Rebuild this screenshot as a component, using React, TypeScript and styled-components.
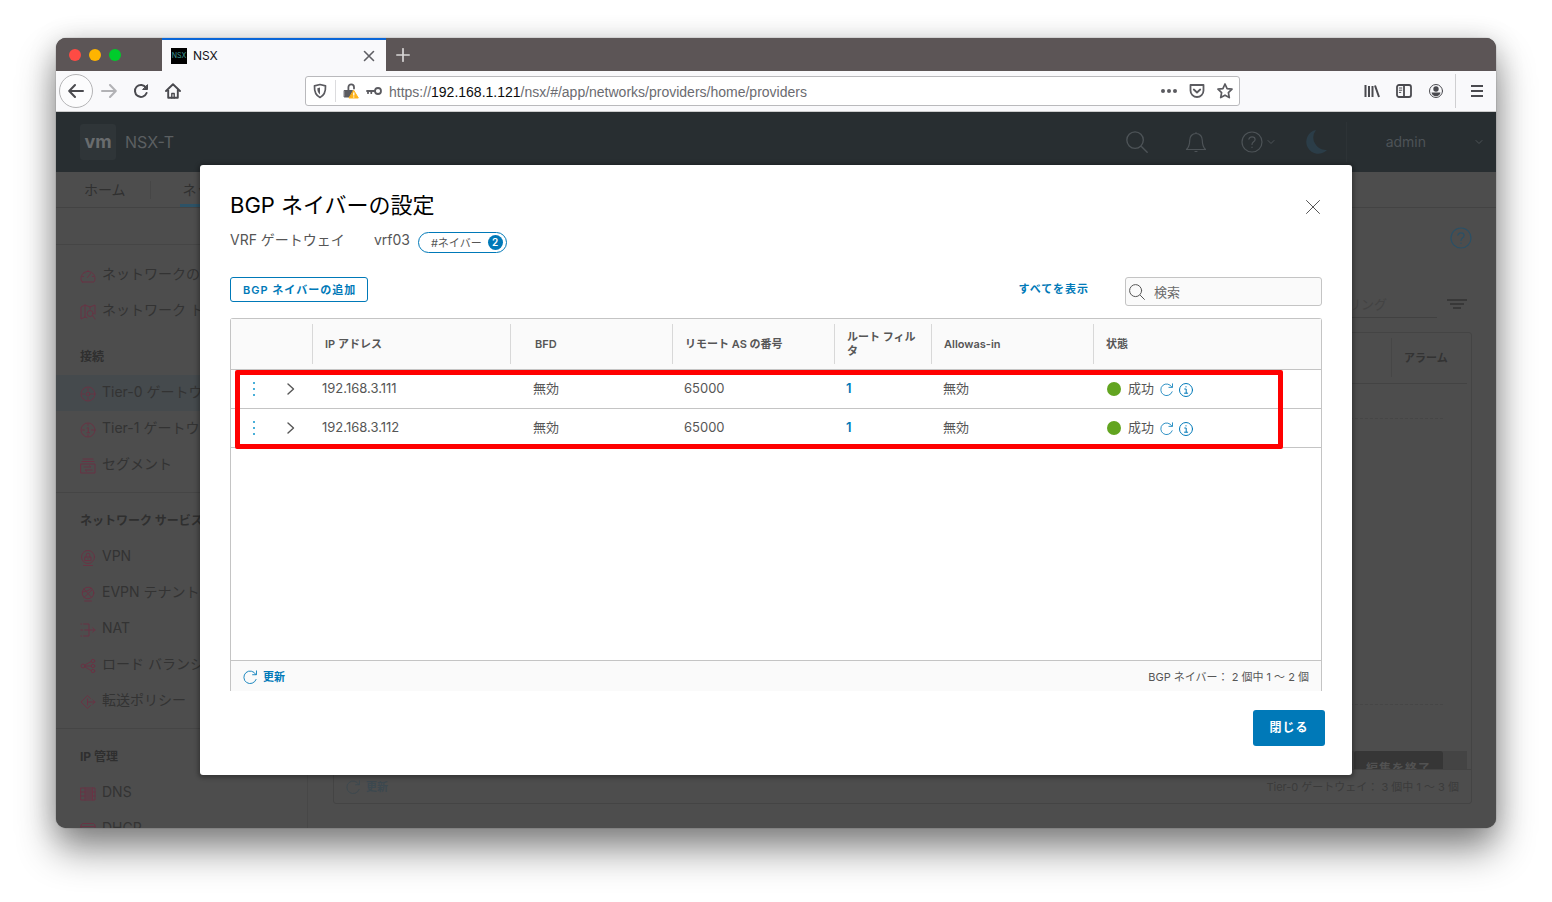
import React from 'react';
import styled, { createGlobalStyle } from 'styled-components';

const GlobalStyle = createGlobalStyle`
  * { box-sizing: border-box; }
  body {
    margin: 0;
    background: #ffffff;
    color: #565656;
    font-family: Inter, "Noto Sans CJK JP", sans-serif;
    font-size: 14px;
    line-height: 20px;
  }
  button, input { font: inherit; color: inherit; }
  button { padding: 0; border: 0; background: none; cursor: pointer; }
  a { color: inherit; text-decoration: none; }
  svg { display: block; flex: none; }
`;

/* ---------- icons ---------- */

type IconProps = { size?: number; box?: number; stroke?: number; color?: string; children: React.ReactNode };

const Icon = ({ size = 16, box = 16, stroke = 1, color = 'currentColor', children }: IconProps) => (
  <svg
    width={size}
    height={size}
    viewBox={`0 0 ${box} ${box}`}
    fill="none"
    stroke={color}
    strokeWidth={stroke}
    strokeLinecap="round"
    strokeLinejoin="round"
    aria-hidden="true"
  >
    {children}
  </svg>
);

const RefreshIcon = ({ size = 14 }: { size?: number }) => (
  <Icon size={size}>
    <path d="M14.6 5A7.200 7.200 0 1 0 15 10.800M15.400 1v4.400h-4.400" />
  </Icon>
);
const SearchIcon = ({ size = 16 }: { size?: number }) => (
  <Icon size={size}>
    <circle cx="6.6" cy="6.6" r="6" />
    <path d="M11.4 11.4l4 4" />
  </Icon>
);
const HelpIcon = ({ size = 22 }: { size?: number }) => (
  <Icon size={size} box={22} stroke={1.2}>
    <circle cx="11" cy="11" r="10" />
    <path d="M7.9 8.2c.4-1.6 1.6-2.3 3.1-2.3 1.8 0 3.1 1 3.1 2.6 0 2.4-3.1 2.3-3.1 5M11 16.2v.3" />
  </Icon>
);
const ChevronDown = () => (
  <Icon size={8} box={8}>
    <path d="M1 2.5l3 3 3-3" />
  </Icon>
);
const InfoIcon = () => (
  <Icon size={14} box={14}>
    <circle cx="7" cy="7" r="6.5" />
    <path d="M5.7 6h1.5v4M5.5 10.2h3.2M7 3.6v.4" />
  </Icon>
);

const navIcons: Record<string, React.ReactNode> = {
  gauge: <path d="M2.5 14h11a1 1 0 0 0 .8-.5A7 7 0 1 0 1.700 13.500a1 1 0 0 0 .8.5zM7.500 9.500l3-4M8 2.500v1M2.500 8.500h1M12.500 8.500h1M4 4.500l.7.7" />,
  map: <path d="M5 13l-4 2V3l4-2 5 2 5-2v9M5 1v12M5 13l2 .8M10 3v2M12.800 11.800L15 15M13.200 9.500a3 3 0 1 1-6 0 3 3 0 0 1 6 0z" />,
  tier0: (
    <>
      <circle cx="8" cy="8" r="7" />
      <circle cx="8" cy="8" r="2" />
      <path d="M8 2.500v1.800M8 11.700v1.800M2.500 8h1.800M11.700 8h1.800" />
    </>
  ),
  tier1: (
    <>
      <circle cx="8" cy="8" r="7" />
      <path d="M7 6.200L8.300 5.500v5M7 10.700h2.600M8 2.300v1M8 12.700v1M2.500 8h2M11.500 8h2" />
    </>
  ),
  segment: <path d="M1 6h14v9H1zM2 3.500h12M3 1h10M4 9h7l-1.500-1.300M12 12H5l1.500 1.300" />,
  vpn: (
    <>
      <circle cx="8" cy="7" r="6.500" />
      <path d="M5 7h6v3.500H5zM6.200 7V5a1.800 1.800 0 0 1 3.600 0v2M8 8.500v.5M3.500 15.500h9" />
    </>
  ),
  evpn: (
    <>
      <circle cx="8" cy="7" r="5.800" />
      <path d="M4 3l7.500 8.500M12.500 3.500L4 11.500M3 6c3-1 7-1 8-4M4.500 15h7" />
    </>
  ),
  nat: <path d="M1 2h.5M3.500 2H9v12H3.500M1 14h.5M1 8h1.500M4.500 8H15M12.800 5.800L15 8l-2.200 2.200" />,
  lb: (
    <>
      <circle cx="3" cy="8" r="2" />
      <circle cx="13" cy="3" r="1.700" />
      <circle cx="13" cy="8" r="1.700" />
      <circle cx="13" cy="13" r="1.700" />
      <path d="M5 7l6-3.500M5.200 8h6M5 9l6 3.500" />
    </>
  ),
  forward: <path d="M10.500 4.500L7.500 1.500 1 8l6.500 6.500 3-3M7.500 5v6M7.500 8H15M12.800 5.800L15 8l-2.200 2.200" />,
  dns: <path d="M1 2h14v12H1zM1 6h14M1 10h14M5 2v12M6 4h6M6 8h6M6 12h6M12.500 2v12" />,
  dhcp: <path d="M1 15V3l1.500-1.500h11L15 3v12M1 4.500h14M4 7.500h8" />,
};

/* ---------- browser chrome ---------- */

const Desktop = styled.div`
  display: flex;
  height: 100vh;
  min-height: 640px;
  padding: 38px 56px 74px;
`;

const BrowserWindow = styled.div`
  flex: 1;
  min-width: 0;
  display: flex;
  flex-direction: column;
  border-radius: 10px;
  overflow: hidden;
  background: #4d4d4d;
  box-shadow: 0 0 1px rgba(0, 0, 0, 0.7), 0 22px 38px rgba(0, 0, 0, 0.44), 0 4px 28px rgba(0, 0, 0, 0.18);
`;

const TabStrip = styled.div`
  flex: none;
  display: flex;
  height: 33px;
  background: #5c5556;
`;

const TrafficLights = styled.div`
  display: flex;
  align-items: center;
  gap: 8px;
  width: 106px;
  padding: 1px 0 0 13px;
`;

const Light = styled.button<{ $color: string }>`
  width: 12px;
  height: 12px;
  border-radius: 50%;
  background: ${(p) => p.$color};
`;

const BrowserTab = styled.div`
  display: flex;
  align-items: center;
  gap: 6px;
  width: 224px;
  padding: 0 11px 0 9px;
  border-top: 2px solid #0a66d8;
  background: #f9f9fb;
  color: #15141a;
  font-size: 12px;
`;

const Favicon = styled.span`
  display: grid;
  place-items: center;
  width: 16px;
  height: 16px;
  background: #000000;
  color: #3f9a94;
  font-size: 7px;
  line-height: 16px;
`;

const TabTitle = styled.span`
  flex: 1;
`;

const CloseTab = styled.button`
  color: #5f5f64;
`;

const NewTab = styled.button`
  width: 33px;
  display: grid;
  place-items: center;
  color: #d8d6d6;
`;

const Toolbar = styled.div`
  flex: none;
  display: flex;
  align-items: center;
  height: 41px;
  padding: 0 3px;
  background: #f9f9fb;
  border-bottom: 1px solid #cccccc;
  color: #4a4a4f;
`;

const ToolButton = styled.button<{ $faded?: boolean }>`
  display: grid;
  place-items: center;
  width: 32px;
  height: 32px;
  opacity: ${(p) => (p.$faded ? 0.4 : 1)};
`;

const BackButton = styled(ToolButton)`
  width: 34px;
  height: 34px;
  border: 1px solid #b4b4b6;
  border-radius: 50%;
  background: #fcfcfd;
`;

const AddressSlot = styled.div`
  flex: 1;
  display: flex;
  justify-content: center;
  padding: 0 116px;
`;

const AddressBar = styled.div`
  flex: 1;
  display: flex;
  align-items: center;
  gap: 12px;
  height: 30px;
  padding: 0 6px;
  border: 1px solid #b9b9bc;
  border-radius: 3px;
  background: #ffffff;
  color: #5b5b60;
`;

const SiteIcons = styled.div`
  display: flex;
  align-items: center;
  gap: 7px;
`;

const SiteDivider = styled.span`
  width: 1px;
  height: 22px;
  background: #dcdcde;
`;

const Address = styled.div`
  flex: 1;
  margin-left: -5px;
  padding-top: 2px;
  font-family: "Liberation Sans", sans-serif;
  font-size: 14px;
  white-space: nowrap;
  color: #6b6b70;
`;

const Host = styled.span`
  color: #0c0c0d;
`;

const ToolDivider = styled.span`
  width: 1px;
  height: 34px;
  margin: 0 5px 0 3px;
  background: #cfcfd1;
`;

/* ---------- page behind the dialog ---------- */

const AppArea = styled.div`
  position: relative;
  flex: 1;
  min-height: 0;
  display: flex;
  flex-direction: column;
  overflow: hidden;
  color: #333333;
`;

const AppHeader = styled.header`
  flex: none;
  display: flex;
  align-items: center;
  justify-content: space-between;
  height: 60px;
  padding: 0 13px 0 24px;
  background: #282e31;
  color: #4d5357;
`;

const Brand = styled.div`
  display: flex;
  align-items: center;
  gap: 9px;
  color: #5b5f61;
  font-size: 16px;
`;

const BrandMark = styled.span`
  display: grid;
  place-items: center;
  width: 36px;
  height: 36px;
  border-radius: 3px;
  background: #2f3538;
  color: #696c6e;
  font-size: 18px;
  font-weight: 700;
  line-height: 32px;
`;

const HeaderTools = styled.div`
  display: flex;
  align-items: center;
`;

const HeaderButton = styled.button<{ $gap: number }>`
  display: flex;
  align-items: center;
  gap: 4px;
  margin-right: ${(p) => p.$gap}px;
`;

const UserMenu = styled.button`
  display: flex;
  align-items: center;
  gap: 49px;
  height: 40px;
  padding-left: 39px;
  border-left: 1px solid #2d3336;
`;

const MainTabs = styled.nav`
  flex: none;
  display: flex;
  height: 36px;
  padding-left: 28px;
  border-bottom: 1px solid #434343;
  color: #303030;
`;

const MainTab = styled.a<{ $active?: boolean }>`
  padding: 8px 3px 0;
  margin-left: ${(p) => (p.$active ? '29px' : '-3px')};
  line-height: 20px;
  border-bottom: 3px solid ${(p) => (p.$active ? '#2d5266' : 'transparent')};
`;

const TabDivider = styled.span`
  width: 1px;
  height: 18px;
  margin: 9px 0 0 21px;
  background: #464646;
`;

const Body = styled.div`
  flex: 1;
  min-height: 0;
  display: flex;
`;

const Sidebar = styled.nav`
  flex: none;
  width: 252px;
  padding-top: 36px;
  border-right: 1px solid #474747;
  overflow: hidden;
`;

const NavGroup = styled.section<{ $first?: boolean }>`
  padding: ${(p) => (p.$first ? '12px' : '0')} 0 9px;
  border-top: 1px solid #454545;
`;

const NavHeading = styled.h2`
  height: 46px;
  margin: 0;
  padding: 19px 24px 0;
  font-size: 12px;
  line-height: 18px;
  font-weight: 700;
  color: #2f2f2f;
`;

const NavItem = styled.a<{ $active?: boolean }>`
  display: flex;
  align-items: center;
  gap: 6px;
  height: 36px;
  padding: 0 24px 2px;
  white-space: nowrap;
  background: ${(p) => (p.$active ? '#454a4d' : 'transparent')};
  svg { color: #693344; margin-top: 4px; }
`;

const Main = styled.main`
  flex: 1;
  min-width: 0;
  display: flex;
  flex-direction: column;
  padding: 19px 24px 24px 25px;
`;

const MainTop = styled.div`
  display: flex;
  justify-content: flex-end;
  color: #2a5066;
`;

const FilterRow = styled.div`
  display: flex;
  justify-content: flex-end;
  align-items: center;
  gap: 10px;
  height: 27px;
  margin: 42px 5px 14px 0;
`;

const FilterInput = styled.input`
  width: 260px;
  height: 27px;
  padding: 0 50px 0 0;
  border: 0;
  border-bottom: 1px solid #414141;
  background: none;
  font-size: 13px;
  text-align: right;
  &::placeholder { color: #434343; opacity: 1; }
`;

const BackGrid = styled.div`
  flex: 1;
  display: flex;
  flex-direction: column;
  min-height: 0;
  border: 1px solid #444444;
  border-radius: 3px;
`;

const BackHead = styled.div`
  display: flex;
  justify-content: flex-end;
  height: 51px;
  margin-right: 4px;
  padding: 5px 0 6px;
  border-bottom: 1px solid #434343;
`;

const BackHeadCell = styled.span`
  width: 76px;
  padding-left: 12px;
  border-left: 1px solid #464646;
  font-size: 11px;
  font-weight: 700;
  line-height: 40px;
`;

const BackRows = styled.div`
  flex: 1;
  display: flex;
  flex-direction: column;
  justify-content: space-between;
  min-height: 0;
  padding-top: 34px;
  margin-right: 4px;
`;

const Dotted = styled.div`
  margin-right: 24px;
  border-top: 1px dashed #464646;
`;

const EditBar = styled.div`
  display: flex;
  justify-content: flex-end;
  height: 18px;
  margin-top: 46px;
  padding-right: 24px;
  background: #444444;
  overflow: hidden;
`;

const EditButton = styled.button`
  height: 36px;
  padding: 0 12px;
  border-radius: 3px;
  background: #363636;
  color: #525252;
  font-size: 12px;
  font-weight: 700;
  letter-spacing: 1px;
`;

const BackFoot = styled.footer`
  flex: none;
  display: flex;
  align-items: center;
  justify-content: space-between;
  height: 34px;
  padding: 0 12px;
  border-top: 1px solid #434343;
  color: #3b3b3b;
  font-size: 11px;
`;

/* ---------- dialog ---------- */

const Overlay = styled.div`
  position: absolute;
  inset: 0;
  display: flex;
  justify-content: center;
  padding: 53px 0;
`;

const Dialog = styled.section`
  width: 80%;
  display: flex;
  flex-direction: column;
  padding: 26px 30px 29px;
  border-radius: 3px;
  background: #ffffff;
  color: #565656;
  box-shadow: 0 1px 4px 2px rgba(0, 0, 0, 0.3);
`;

const DialogHead = styled.div`
  display: flex;
  justify-content: space-between;
  align-items: center;
  height: 28px;
`;

const DialogTitle = styled.h1`
  margin: 0;
  color: #000000;
  font-size: 22px;
  font-weight: 400;
  line-height: 28px;
`;

const CloseIconButton = styled.button`
  padding: 4px 2px 0 0;
`;

const Subtitle = styled.div`
  display: flex;
  align-items: center;
  height: 24px;
  margin-top: 9px;
`;

const GatewayName = styled.span`
  margin: 0 8px 0 29px;
`;

const NeighborTag = styled.button`
  display: flex;
  align-items: center;
  gap: 6px;
  height: 21px;
  margin-top: 5px;
  padding: 0 3px 0 12px;
  border: 1px solid #0079b8;
  border-radius: 11px;
  font-size: 11px;
`;

const Count = styled.span`
  width: 15px;
  height: 15px;
  border-radius: 50%;
  background: #0079b8;
  color: #ffffff;
  font-size: 10px;
  font-weight: 600;
  line-height: 15px;
  text-align: center;
`;

const Actions = styled.div`
  display: flex;
  align-items: flex-start;
  height: 29px;
  margin: 25px 0 12px;
`;

const OutlineButton = styled.button`
  height: 25px;
  padding: 0 11px 0 12px;
  border: 1px solid #0079b8;
  border-radius: 3px;
  color: #0079b8;
  font-size: 11px;
  font-weight: 600;
  letter-spacing: 1px;
`;

const ShowAll = styled.a`
  margin: 0 36px 0 auto;
  color: #0079b8;
  font-size: 11px;
  font-weight: 600;
  line-height: 24px;
  letter-spacing: 1px;
`;

const SearchBox = styled.label`
  display: flex;
  align-items: center;
  gap: 9px;
  width: 197px;
  height: 29px;
  padding: 0 3px;
  border: 1px solid #c4c4c4;
  border-radius: 3px;
  background: #fafafa;
`;

const SearchInput = styled.input`
  flex: 1;
  min-width: 0;
  padding: 0;
  border: 0;
  outline: 0;
  background: none;
  font-size: 13px;
  &::placeholder { color: #6a6a6a; opacity: 1; }
`;

const Grid = styled.div`
  position: relative;
  flex: 1;
  min-height: 0;
  display: flex;
  flex-direction: column;
  border: 1px solid #c4c4c4;
  border-bottom: 0;
  border-radius: 3px 3px 0 0;
`;

const GridScroll = styled.div`
  flex: 1;
  min-height: 0;
`;

const Table = styled.table`
  width: 100%;
  table-layout: fixed;
  border-collapse: separate;
  border-spacing: 0;
`;

const Col = styled.col<{ $w?: number }>`
  width: ${(p) => (p.$w ? `${p.$w}px` : 'auto')};
`;

const Th = styled.th`
  height: 51px;
  padding: 0;
  background: #fafafa;
  border-bottom: 1px solid #c4c4c4;
  text-align: left;
`;

const ThLabel = styled.div<{ $wide?: boolean; $plain?: boolean }>`
  display: flex;
  align-items: center;
  height: 40px;
  padding: 0 8px 0 ${(p) => (p.$wide ? 24 : 12)}px;
  border-left: 1px solid ${(p) => (p.$plain ? 'transparent' : '#d8d8d8')};
  font-size: 11px;
  font-weight: 600;
  line-height: 14px;
`;

const Td = styled.td<{ $pad?: number }>`
  height: 39px;
  padding: 0 0 2px ${(p) => p.$pad ?? 12}px;
  border-bottom: 1px solid #c4c4c4;
  font-size: 13px;
`;

const RowTools = styled.div`
  display: flex;
  align-items: center;
  gap: 17px;
  padding-top: 2px;
`;

const KebabButton = styled.button`
  color: #49afd9;
`;

const FilterLink = styled.a`
  color: #0079b8;
  font-weight: 600;
`;

const Status = styled.div`
  display: flex;
  align-items: center;
  gap: 6px;
  color: #0079b8;
`;

const StatusText = styled.span`
  color: #565656;
`;

const StatusDot = styled.span`
  width: 14px;
  height: 14px;
  margin: 2px 1px 0 0;
  border-radius: 50%;
  background: #62a420;
`;

const StatusButton = styled.button`
  margin-top: 3px;
`;

const Highlight = styled.div`
  position: absolute;
  top: 51px;
  left: 4px;
  right: 38px;
  height: 79px;
  border: 5px solid #ff0000;
  border-radius: 2px;
  pointer-events: none;
`;

const GridFoot = styled.footer`
  display: flex;
  align-items: center;
  justify-content: space-between;
  height: 31px;
  padding: 2px 12px 0;
  border-top: 1px solid #c4c4c4;
  background: #fafafa;
  font-size: 11px;
`;

const RefreshButton = styled.button<{ $dim?: boolean }>`
  display: flex;
  align-items: center;
  gap: 6px;
  color: ${(p) => (p.$dim ? '#3c484f' : '#0079b8')};
  font-size: 11px;
  font-weight: 600;
`;

const DialogFoot = styled.div`
  display: flex;
  justify-content: flex-end;
  margin: 19px -3px 0 0;
`;

const PrimaryButton = styled.button`
  width: 72px;
  height: 36px;
  border-radius: 3px;
  background: #0079b8;
  color: #ffffff;
  font-size: 12px;
  font-weight: 600;
  letter-spacing: 1px;
`;

/* ---------- data ---------- */

type Item = { icon: string; label: string; active?: boolean };
type Group = { heading?: string; items: Item[] };

const overview: Item[] = [
  { icon: 'gauge', label: 'ネットワークの概要' },
  { icon: 'map', label: 'ネットワーク トポロジ' },
];

const groups: Group[] = [
  {
    heading: '接続',
    items: [
      { icon: 'tier0', label: 'Tier-0 ゲートウェイ', active: true },
      { icon: 'tier1', label: 'Tier-1 ゲートウェイ' },
      { icon: 'segment', label: 'セグメント' },
    ],
  },
  {
    heading: 'ネットワーク サービス',
    items: [
      { icon: 'vpn', label: 'VPN' },
      { icon: 'evpn', label: 'EVPN テナント' },
      { icon: 'nat', label: 'NAT' },
      { icon: 'lb', label: 'ロード バランシング' },
      { icon: 'forward', label: '転送ポリシー' },
    ],
  },
  {
    heading: 'IP 管理',
    items: [
      { icon: 'dns', label: 'DNS' },
      { icon: 'dhcp', label: 'DHCP' },
    ],
  },
];

const neighbors = [
  { ip: '192.168.3.111', bfd: '無効', as: '65000', filters: '1', allowas: '無効', status: '成功' },
  { ip: '192.168.3.112', bfd: '無効', as: '65000', filters: '1', allowas: '無効', status: '成功' },
];

const NavLinks = ({ items }: { items: Item[] }) => (
  <>
    {items.map((item) => (
      <NavItem key={item.label} href="#" $active={item.active}>
        <Icon>{navIcons[item.icon]}</Icon>
        {item.label}
      </NavItem>
    ))}
  </>
);

const BrowserChrome = () => (
  <>
    <TabStrip>
      <TrafficLights>
        <Light $color="#ff4b44" aria-label="Close window" />
        <Light $color="#ffb400" aria-label="Minimize window" />
        <Light $color="#00cc2c" aria-label="Zoom window" />
      </TrafficLights>
      <BrowserTab>
        <Favicon>NSX</Favicon>
        <TabTitle>NSX</TabTitle>
        <CloseTab aria-label="Close tab">
          <Icon size={12} box={12} stroke={1.6}>
            <path d="M1.500 1.500l9 9M10.500 1.500l-9 9" />
          </Icon>
        </CloseTab>
      </BrowserTab>
      <NewTab aria-label="New tab">
        <Icon size={14} box={14} stroke={1.7}>
          <path d="M7 .8v12.400M.8 7h12.400" />
        </Icon>
      </NewTab>
    </TabStrip>
    <Toolbar>
      <BackButton aria-label="Back">
        <Icon stroke={2}>
          <path d="M15 8H1.500M7 2L1.200 8 7 14" />
        </Icon>
      </BackButton>
      <ToolButton $faded aria-label="Forward">
        <Icon stroke={2}>
          <path d="M1 8h13.500M9 2l5.800 6L9 14" />
        </Icon>
      </ToolButton>
      <ToolButton aria-label="Reload">
        <Icon stroke={2}>
          <path d="M13 4.600A6 6 0 1 0 13.600 10" />
          <path d="M14.500 2v4.500H10z" fill="currentColor" stroke="currentColor" strokeWidth="1" />
        </Icon>
      </ToolButton>
      <ToolButton aria-label="Home">
        <Icon stroke={1.9}>
          <path d="M1 8l7-6.700L15 8M3.200 7v7.800h9.600V7" />
          <path d="M6.800 15v-4.500h2.400V15" strokeWidth="1.400" />
        </Icon>
      </ToolButton>
      <AddressSlot>
        <AddressBar>
          <SiteIcons>
            <Icon stroke={1.7}>
              <path d="M8 1.500l5.500 1.300c.3 6-1.300 9.700-5.500 11.700-4.200-2-5.800-5.700-5.500-11.700z" />
              <path d="M8 4.500v7C6.200 10 5.300 8 5.300 5.200z" fill="currentColor" stroke="none" />
            </Icon>
            <SiteDivider />
            <Icon>
              <path d="M5.400 7V4.200a2.800 2.800 0 0 1 5.600 0V5.500" strokeWidth="1.800" />
              <path d="M1.500 7.500h8V14h-8z" fill="currentColor" />
              <path d="M10.800 7.500L15.300 15H6.300z" fill="#ffb31a" stroke="#ffb31a" />
              <path d="M10.800 9.800v2.200M10.800 13.900v.1" stroke="#ffffff" strokeWidth="1.300" />
            </Icon>
            <Icon stroke={1.8}>
              <circle cx="12" cy="8" r="3" />
              <path d="M9 8H1M2 8v2.200M5.300 8v2.200" />
            </Icon>
          </SiteIcons>
          <Address>
            https://<Host>192.168.1.121</Host>/nsx/#/app/networks/providers/home/providers
          </Address>
          <Icon>
            <g fill="currentColor" stroke="none">
              <circle cx="2" cy="8" r="2" />
              <circle cx="8" cy="8" r="2" />
              <circle cx="14" cy="8" r="2" />
            </g>
          </Icon>
          <Icon stroke={1.8}>
            <path d="M1.500 2h13v5.500a6.500 6.500 0 0 1-13 0zM4.800 6.500L8 9.500l3.200-3" />
          </Icon>
          <Icon stroke={1.7}>
            <path d="M8 1l2.100 4.600 4.900.6-3.600 3.400.9 5L8 12.200l-4.300 2.400.9-5L1 6.200l4.900-.6z" />
          </Icon>
        </AddressBar>
      </AddressSlot>
      <ToolButton aria-label="Library">
        <Icon stroke={2}>
          <path d="M1.500 2v12M5 3v11M8.500 3v11M11 2.500l4 11.500" strokeLinecap="butt" />
        </Icon>
      </ToolButton>
      <ToolButton aria-label="Sidebars">
        <Icon stroke={1.8}>
          <rect x="1" y="2" width="14" height="12" rx="2" />
          <path d="M8 2v12" />
          <path d="M3.300 5h2.500M3.300 7.200h2.500M3.300 9.400h1.500" strokeWidth="1" />
        </Icon>
      </ToolButton>
      <ToolButton aria-label="Account">
        <Icon>
          <circle cx="8" cy="8" r="6.500" />
          <circle cx="8" cy="6" r="2.700" fill="currentColor" stroke="none" />
          <path d="M3.500 9.500h9c-.5 2.500-2.300 3.700-4.500 3.700s-4-1.200-4.500-3.700z" fill="currentColor" stroke="none" />
        </Icon>
      </ToolButton>
      <ToolDivider />
      <ToolButton aria-label="Menu">
        <Icon stroke={2}>
          <path d="M2 3h12M2 8h12M2 13h12" strokeLinecap="butt" />
        </Icon>
      </ToolButton>
    </Toolbar>
  </>
);

const GatewayPage = () => (
  <>
    <AppHeader>
      <Brand>
        <BrandMark>vm</BrandMark>
        NSX-T
      </Brand>
      <HeaderTools>
        <HeaderButton $gap={37} aria-label="Search">
          <SearchIcon size={22} />
        </HeaderButton>
        <HeaderButton $gap={34} aria-label="Notifications">
          <Icon size={22} box={22} stroke={1.2}>
            <path d="M11 1.500v1M11 2.500c-4 0-6.300 3-6.300 7 0 5-.7 6.500-3.200 9h19c-2.500-2.500-3.200-4-3.200-9 0-4-2.300-7-6.300-7zM10 20.500h2" />
          </Icon>
        </HeaderButton>
        <HeaderButton $gap={28} aria-label="Help">
          <HelpIcon />
          <ChevronDown />
        </HeaderButton>
        <HeaderButton $gap={19} aria-label="Dark theme">
          <Icon size={24} box={24} color="none">
            <path d="M13 0A12 12 0 1 0 24 20 12.500 12.500 0 0 1 13 0z" fill="#2b3d48" />
          </Icon>
        </HeaderButton>
        <UserMenu>
          admin
          <ChevronDown />
        </UserMenu>
      </HeaderTools>
    </AppHeader>
    <MainTabs>
      <MainTab href="#">ホーム</MainTab>
      <TabDivider />
      <MainTab href="#" $active>
        ネットワーク
      </MainTab>
    </MainTabs>
    <Body>
      <Sidebar>
        <NavGroup $first>
          <NavLinks items={overview} />
          <NavHeading>{groups[0].heading}</NavHeading>
          <NavLinks items={groups[0].items} />
        </NavGroup>
        {groups.slice(1).map((group) => (
          <NavGroup key={group.heading}>
            <NavHeading>{group.heading}</NavHeading>
            <NavLinks items={group.items} />
          </NavGroup>
        ))}
      </Sidebar>
      <Main>
        <MainTop>
          <HelpIcon />
        </MainTop>
        <FilterRow>
          <FilterInput aria-label="フィルタリング" placeholder="フィルタリング" />
          <Icon size={20} box={20} color="#383838" stroke={2}>
            <path d="M0 5h20M3 9h14M6 13h8" strokeLinecap="butt" />
          </Icon>
        </FilterRow>
        <BackGrid>
          <BackHead>
            <BackHeadCell>アラーム</BackHeadCell>
          </BackHead>
          <BackRows>
            <Dotted />
            <div>
              <Dotted />
              <EditBar>
                <EditButton>編集を終了</EditButton>
              </EditBar>
            </div>
          </BackRows>
          <BackFoot>
            <RefreshButton $dim>
              <RefreshIcon />
              更新
            </RefreshButton>
            <span>Tier-0 ゲートウェイ： 3 個中 1 ～ 3 個</span>
          </BackFoot>
        </BackGrid>
      </Main>
    </Body>
  </>
);

const NeighborDialog = () => (
  <Overlay>
    <Dialog role="dialog" aria-labelledby="dialog-title">
      <DialogHead>
        <DialogTitle id="dialog-title">BGP ネイバーの設定</DialogTitle>
        <CloseIconButton aria-label="閉じる">
          <Icon size={14} box={14}>
            <path d="M.5.5l13 13M13.500.5l-13 13" />
          </Icon>
        </CloseIconButton>
      </DialogHead>
      <Subtitle>
        <span>VRF ゲートウェイ</span>
        <GatewayName>vrf03</GatewayName>
        <NeighborTag>
          #ネイバー
          <Count>2</Count>
        </NeighborTag>
      </Subtitle>
      <Actions>
        <OutlineButton>BGP ネイバーの追加</OutlineButton>
        <ShowAll href="#">すべてを表示</ShowAll>
        <SearchBox>
          <SearchIcon />
          <SearchInput type="text" aria-label="検索" placeholder="検索" />
        </SearchBox>
      </Actions>
      <Grid>
        <GridScroll>
          <Table>
            <colgroup>
              <Col $w={81} />
              <Col $w={198} />
              <Col $w={162} />
              <Col $w={162} />
              <Col $w={97} />
              <Col $w={162} />
              <Col />
            </colgroup>
            <thead>
              <tr>
                <Th aria-label="操作"><ThLabel $plain /></Th>
                <Th><ThLabel>IP アドレス</ThLabel></Th>
                <Th><ThLabel $wide>BFD</ThLabel></Th>
                <Th><ThLabel>リモート AS の番号</ThLabel></Th>
                <Th><ThLabel>ルート フィルタ</ThLabel></Th>
                <Th><ThLabel>Allowas-in</ThLabel></Th>
                <Th><ThLabel>状態</ThLabel></Th>
              </tr>
            </thead>
            <tbody>
              {neighbors.map((n) => (
                <tr key={n.ip}>
                  <Td $pad={21}>
                    <RowTools>
                      <KebabButton aria-label="メニュー">
                        <Icon size={16} box={16} color="none">
                          <path d="M1 1h2v2H1zM1 7h2v2H1zM1 13h2v2H1z" fill="#49afd9" />
                        </Icon>
                      </KebabButton>
                      <button aria-label="展開">
                        <Icon size={12} box={12} stroke={1.4}>
                          <path d="M3 1l5.500 5L3 11" />
                        </Icon>
                      </button>
                    </RowTools>
                  </Td>
                  <Td $pad={10}>{n.ip}</Td>
                  <Td $pad={23}>{n.bfd}</Td>
                  <Td>{n.as}</Td>
                  <Td><FilterLink href="#">{n.filters}</FilterLink></Td>
                  <Td>{n.allowas}</Td>
                  <Td $pad={14}>
                    <Status>
                      <StatusDot />
                      <StatusText>{n.status}</StatusText>
                      <StatusButton aria-label="更新"><RefreshIcon size={13} /></StatusButton>
                      <StatusButton aria-label="詳細"><InfoIcon /></StatusButton>
                    </Status>
                  </Td>
                </tr>
              ))}
            </tbody>
          </Table>
        </GridScroll>
        <GridFoot>
          <RefreshButton>
            <RefreshIcon />
            更新
          </RefreshButton>
          <span>BGP ネイバー： 2 個中 1 ～ 2 個</span>
        </GridFoot>
        <Highlight />
      </Grid>
      <DialogFoot>
        <PrimaryButton>閉じる</PrimaryButton>
      </DialogFoot>
    </Dialog>
  </Overlay>
);

export default function App() {
  return (
    <>
      <GlobalStyle />
      <Desktop>
        <BrowserWindow>
          <BrowserChrome />
          <AppArea>
            <GatewayPage />
            <NeighborDialog />
          </AppArea>
        </BrowserWindow>
      </Desktop>
    </>
  );
}
